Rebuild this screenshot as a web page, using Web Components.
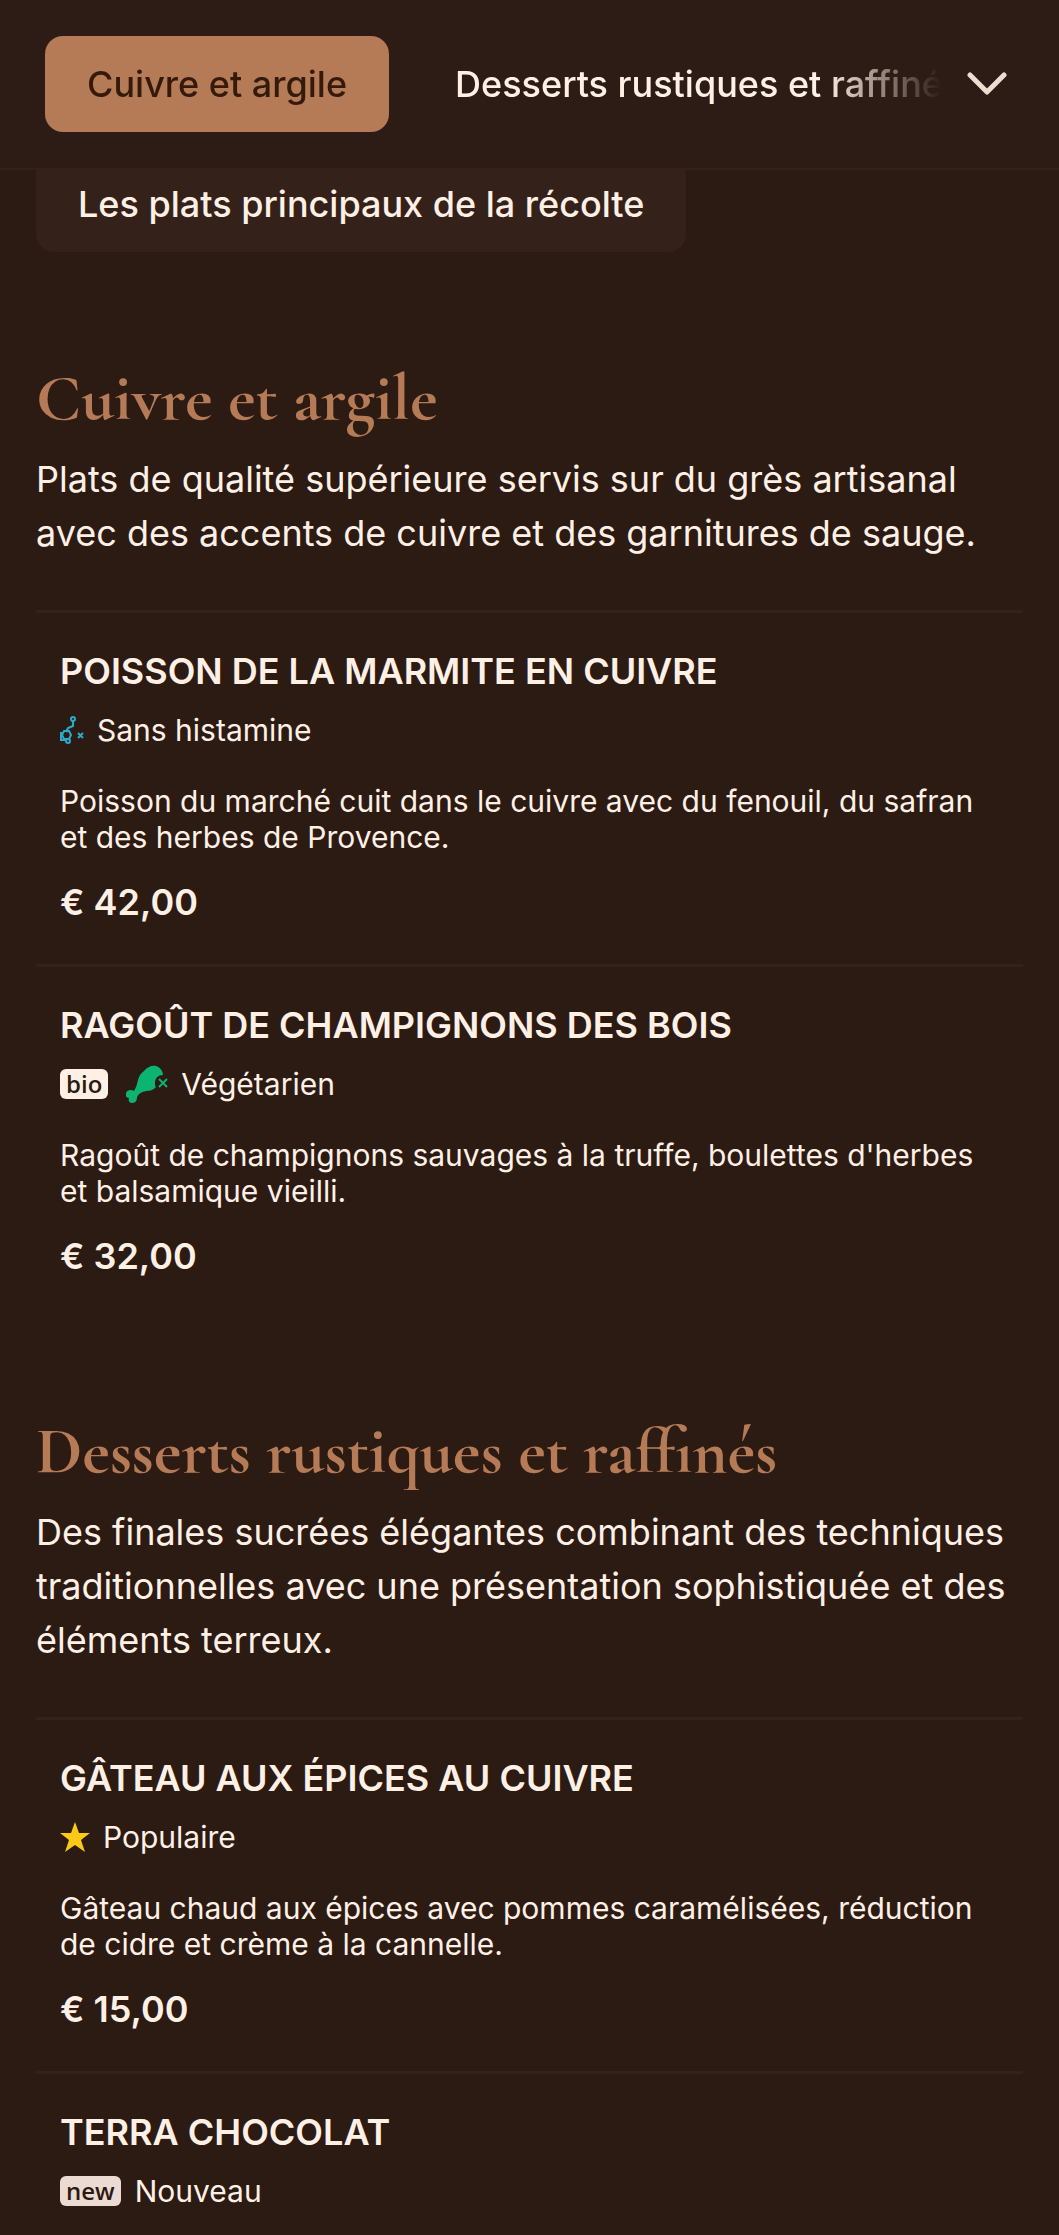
<!DOCTYPE html>
<html lang="fr">
<head>
<meta charset="utf-8">
<meta name="viewport" content="width=device-width, initial-scale=1">
<title>Menu</title>
<style>
  :root {
    --bg: #2c1b13;
    --bar: #2d1c15;
    --panel: #34221a;
    --line: #33211a;
    --cream: #fff0e6;
    --copper: #b57a56;
  }
  body {
    margin: 0;
    min-height: 100vh;
    background: var(--bg);
    color: var(--cream);
    font-family: Inter, 'Liberation Sans', sans-serif;
    font-size: 36px;
    font-optical-sizing: none;
  }
</style>
</head>
<body>
<menu-page>
  <menu-bar slot="bar">
    <menu-tab active>Cuivre et argile</menu-tab>
    <menu-tab>Desserts rustiques et raffinés</menu-tab>
  </menu-bar>
  <menu-chip>Les plats principaux de la récolte</menu-chip>
  <menu-section heading="Cuivre et argile">
    <span slot="intro">Plats de qualité supérieure servis sur du grès artisanal avec des accents de cuivre et des garnitures de sauge.</span>
    <menu-dish name="POISSON DE LA MARMITE EN CUIVRE" price="€ 42,00">
      <dish-tag slot="tags" icon="histamine">Sans histamine</dish-tag>
      Poisson du marché cuit dans le cuivre avec du fenouil, du safran et des herbes de Provence.
    </menu-dish>
    <menu-dish name="RAGOÛT DE CHAMPIGNONS DES BOIS" price="€ 32,00">
      <dish-badge slot="tags">bio</dish-badge>
      <dish-tag slot="tags" icon="vegetarian">Végétarien</dish-tag>
      Ragoût de champignons sauvages à la truffe, boulettes d'herbes et balsamique vieilli.
    </menu-dish>
  </menu-section>
  <menu-section heading="Desserts rustiques et raffinés">
    <span slot="intro">Des finales sucrées élégantes combinant des techniques traditionnelles avec une présentation sophistiquée et des éléments terreux.</span>
    <menu-dish name="GÂTEAU AUX ÉPICES AU CUIVRE" price="€ 15,00">
      <dish-tag slot="tags" icon="star">Populaire</dish-tag>
      Gâteau chaud aux épices avec pommes caramélisées, réduction de cidre et crème à la cannelle.
    </menu-dish>
    <menu-dish name="TERRA CHOCOLAT">
      <dish-badge slot="tags" muted>new</dish-badge>
      <dish-tag slot="tags">Nouveau</dish-tag>
    </menu-dish>
  </menu-section>
</menu-page>

<script>
const icons = {
  histamine: `
    <svg width="24" height="28" viewBox="0 0 24 28" fill="none" stroke="#2ba9cf" stroke-width="2" aria-hidden="true">
      <circle cx="13" cy="3" r="2"/>
      <path d="M13 5v5l-5 2-2 4"/>
      <path d="M4 15h5l2 4-2 4H4l-2-4z"/>
      <path d="M1 16v8h4"/>
      <circle cx="8" cy="25" r="2"/>
      <path d="M18 17l5 5M23 17l-5 5"/>
    </svg>`,
  vegetarian: `
    <svg width="42" height="38" viewBox="0 0 42 38" aria-hidden="true">
      <path fill="#0bb473" d="M18 6C21 2 26 0 30 1c4 1 7 5 7 9-5 0-8 3-8 8 0 2 0 3 1 4-3 3-6 4-10 4-4 1-7 2-9 6 0 3-1 6-5 6-3 0-4-3-3-5-3 0-4-3-3-5 1-3 5-4 8-2 2-3 3-7 4-11 1-4 3-7 6-9z"/>
      <path fill="none" stroke="#0bb473" stroke-width="2" d="M33 14l8 8M41 14l-8 8"/>
    </svg>`,
  star: `
    <svg width="30" height="30" viewBox="0 0 30 30" aria-hidden="true">
      <path fill="#fcc917" d="M15 0l4 11h11l-9 7 4 12-10-7-10 7 4-12-9-7h11z"/>
    </svg>`
};

class MenuPage extends HTMLElement {
  connectedCallback() {
    this.attachShadow({ mode: 'open' });
    this.shadowRoot.innerHTML = `
      <style>
        :host { display: block; }
        /* content is scrolled a little way under the sticky bar */
        main {
          display: flex;
          flex-direction: column;
          align-items: stretch;
          margin-top: -14px;
          padding: 0 36px 24px;
        }
      </style>
      <slot name="bar"></slot>
      <main><slot></slot></main>
    `;
  }
}

class MenuBar extends HTMLElement {
  connectedCallback() {
    this.attachShadow({ mode: 'open' });
    this.shadowRoot.innerHTML = `
      <style>
        :host {
          display: block;
          position: sticky;
          top: 0;
          z-index: 10;
          background: var(--bar);
          border-bottom: 2px solid var(--line);
        }
        header {
          display: flex;
          align-items: center;
          padding: 36px 44px 36px 45px;
        }
        nav {
          flex: 1;
          min-width: 0;
          display: flex;
          gap: 24px;
          overflow: hidden;
          -webkit-mask-image: linear-gradient(to right, #000 calc(100% - 116px), transparent);
          mask-image: linear-gradient(to right, #000 calc(100% - 116px), transparent);
        }
        button {
          display: flex;
          padding: 12px 8px;
          margin-left: 18px;
          border: 0;
          background: none;
          cursor: pointer;
        }
      </style>
      <header>
        <nav aria-label="Catégories"><slot></slot></nav>
        <button type="button" aria-label="Toutes les catégories">
          <svg width="40" height="24" viewBox="0 0 40 24" fill="none" stroke="#eedcd1" stroke-width="5" stroke-linecap="round" stroke-linejoin="round">
            <path d="M3 3l17 17L37 3"/>
          </svg>
        </button>
      </header>
    `;
  }
}

class MenuTab extends HTMLElement {
  connectedCallback() {
    this.attachShadow({ mode: 'open' });
    this.shadowRoot.innerHTML = `
      <style>
        :host { display: block; flex: none; }
        button {
          font: inherit;
          font-weight: 500;
          line-height: 48px;
          color: var(--cream);
          background: none;
          border: 0;
          border-radius: 18px;
          padding: 24px 42px;
          white-space: nowrap;
          cursor: pointer;
        }
        :host([active]) button {
          background: var(--copper);
          color: #351a0c;
        }
      </style>
      <button type="button"><slot></slot></button>
    `;
  }
}

class MenuChip extends HTMLElement {
  connectedCallback() {
    this.attachShadow({ mode: 'open' });
    this.shadowRoot.innerHTML = `
      <style>
        :host { display: flex; }
        button {
          font: inherit;
          font-weight: 500;
          line-height: 48px;
          color: var(--cream);
          background: var(--panel);
          border: 0;
          border-radius: 18px;
          padding: 24px 42px;
          cursor: pointer;
        }
      </style>
      <button type="button"><slot></slot></button>
    `;
  }
}

class MenuSection extends HTMLElement {
  connectedCallback() {
    this.attachShadow({ mode: 'open' });
    this.shadowRoot.innerHTML = `
      <style>
        :host { display: block; padding-top: 97px; }
        :host(:first-of-type) { padding-top: 110px; }
        h2 {
          margin: 0 0 18px;
          font-family: 'Cormorant Garamond', 'Liberation Serif', serif;
          font-size: 66px;
          font-weight: 700;
          line-height: 72px;
          color: var(--copper);
        }
        p {
          margin: 0 0 50px;
          line-height: 54px;
        }
      </style>
      <section>
        <h2>${this.getAttribute('heading')}</h2>
        <p><slot name="intro"></slot></p>
        <slot></slot>
      </section>
    `;
  }
}

class MenuDish extends HTMLElement {
  connectedCallback() {
    this.attachShadow({ mode: 'open' });
    const price = this.getAttribute('price');
    this.shadowRoot.innerHTML = `
      <style>
        :host {
          display: block;
          border-top: 3px solid var(--line);
          padding: 34px 24px 38px;
        }
        h3, .price {
          margin: 0;
          font-size: 36px;
          font-weight: 600;
          line-height: 48px;
        }
        .tags {
          display: flex;
          align-items: center;
          gap: 18px;
          height: 36px;
          margin-top: 17px;
        }
        .text {
          margin: 35px 0 23px;
          font-size: 30px;
          line-height: 36px;
        }
      </style>
      <article>
        <h3>${this.getAttribute('name')}</h3>
        <div class="tags"><slot name="tags"></slot></div>
        ${price ? `<p class="text"><slot></slot></p><p class="price">${price}</p>` : ''}
      </article>
    `;
  }
}

class DishTag extends HTMLElement {
  connectedCallback() {
    this.attachShadow({ mode: 'open' });
    this.shadowRoot.innerHTML = `
      <style>
        :host {
          display: flex;
          align-items: center;
          gap: 13px;
          font-size: 30px;
          line-height: 36px;
        }
        svg { flex: none; }
      </style>
      ${icons[this.getAttribute('icon')] || ''}
      <span><slot></slot></span>
    `;
  }
}

class DishBadge extends HTMLElement {
  connectedCallback() {
    this.attachShadow({ mode: 'open' });
    this.shadowRoot.innerHTML = `
      <style>
        :host {
          display: block;
          padding: 0 6px;
          border-radius: 6px;
          background: var(--cream);
          color: #2b1a13;
          font-family: 'Open Sans', 'Noto Sans', sans-serif;
          font-size: 24px;
          font-weight: 600;
          line-height: 30px;
        }
        :host([muted]) {
          background: #ecdbd2;
          margin-right: -4px;
        }
      </style>
      <slot></slot>
    `;
  }
}

customElements.define('menu-page', MenuPage);
customElements.define('menu-bar', MenuBar);
customElements.define('menu-tab', MenuTab);
customElements.define('menu-chip', MenuChip);
customElements.define('menu-section', MenuSection);
customElements.define('menu-dish', MenuDish);
customElements.define('dish-tag', DishTag);
customElements.define('dish-badge', DishBadge);
</script>
</body>
</html>
